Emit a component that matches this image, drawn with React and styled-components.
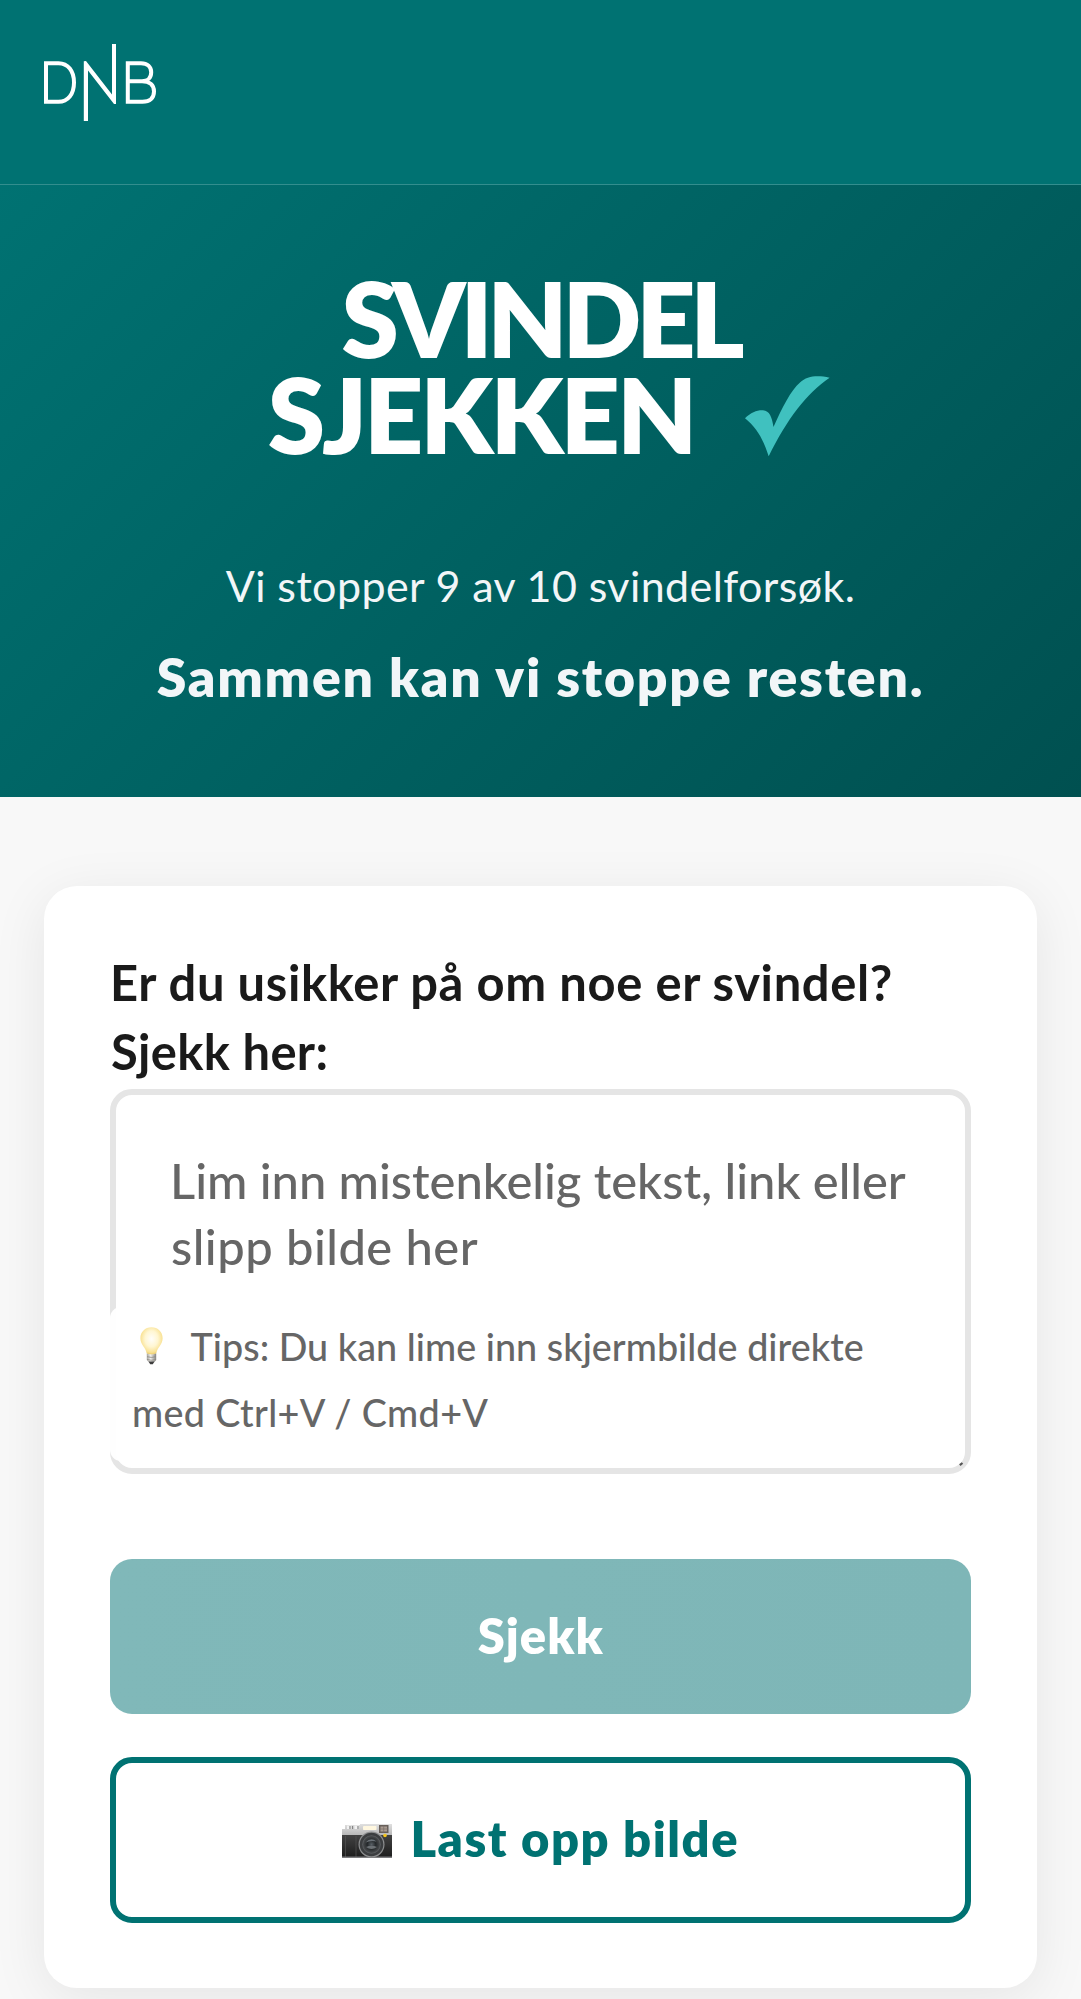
import React from "react";
import styled, { createGlobalStyle, css } from "styled-components";

const GlobalStyle = createGlobalStyle`
  *, *::before, *::after { box-sizing: border-box; }
  body {
    margin: 0;
    background: #f8f8f8;
    font-family: Lato, "Open Sans", sans-serif;
  }
`;

const Page = styled.div`
  height: 1999px;
  overflow: hidden;
  background: #f8f8f8;
`;

const Header = styled.header`
  height: 185px;
  padding: 44px;
  background: #007272;
  border-bottom: 1px solid rgba(255, 255, 255, 0.2);
`;

const Logo = styled.svg`
  display: block;
  width: 112px;
  height: 77px;
`;

const Hero = styled.section`
  height: 612px;
  padding-top: 85px;
  display: flex;
  flex-direction: column;
  align-items: center;
  background: linear-gradient(135deg, #007272 0%, #005050 100%);
  color: #f2f6f8;
`;

const Title = styled.h1`
  margin: 0;
  font-size: 103.5px;
  line-height: 96px;
  font-weight: 800;
  color: #fff;
`;

const TitleLine = styled.span`
  display: flex;
  justify-content: center;
  white-space: nowrap;
  letter-spacing: ${(p) => p.$spacing}px;
`;

const CheckMark = styled.svg`
  flex: none;
  width: 85px;
  height: 81px;
  margin: 9.5px -17px 0 51px;
`;

const Lead = styled.p`
  margin: 89px 0 0;
  font-size: 43px;
  line-height: 69px;
  letter-spacing: 0.4px;
  white-space: nowrap;
`;

const Slogan = styled.p`
  margin: 16px 0 0;
  font-size: 53.5px;
  line-height: 80px;
  font-weight: 800;
  letter-spacing: 1.8px;
  white-space: nowrap;
`;

const Card = styled.main`
  margin: 88.5px 44.5px 0 44px;
  padding: 62.5px 66px 65px;
  background: #fff;
  border-radius: 33px;
  box-shadow: 0 11px 55px rgba(0, 0, 0, 0.08);
`;

const Label = styled.div`
  font-size: 48.9px;
  line-height: 69px;
  font-weight: 700;
  color: #1a1a1a;
`;

const TextLine = styled.div`
  display: flex;
  align-items: center;
  white-space: nowrap;
  letter-spacing: ${(p) => p.$spacing}px;
  padding-left: ${(p) => p.$indent || 0}px;
`;

const InputBox = styled.div`
  position: relative;
  height: 384.5px;
  margin-top: 3px;
  padding: 52px 54px;
  border: 6px solid #e5e5e5;
  border-radius: 22px;
  background: #fff;
  color: #666;
  font-size: 48.9px;
  line-height: 66px;
  font-weight: 500;
`;

const Tip = styled.div`
  position: absolute;
  left: -6px;
  bottom: 7px;
  width: 850px;
  height: 154px;
  padding: 7.5px 22px;
  border-radius: 11px;
  background: rgba(255, 255, 255, 0.95);
  font-size: 37.7px;
  line-height: 66px;
`;

const Bulb = styled.svg`
  flex: none;
  width: 23px;
  height: 38px;
  margin: 0 27.5px 2px 8px;
`;

const ResizeGrip = styled.svg`
  position: absolute;
  right: 1px;
  bottom: 1px;
  width: 5px;
  height: 5px;
`;

const Button = styled.button`
  display: flex;
  align-items: center;
  justify-content: center;
  width: 100%;
  border: 0;
  border-radius: 22px;
  font-family: inherit;
  font-size: 48.9px;
  line-height: 60px;
  font-weight: 800;
  white-space: nowrap;
  ${(p) =>
    p.$outline
      ? css`
          height: 165.5px;
          margin-top: 43.5px;
          padding: 0 0 3px 1px;
          border: 6px solid #007272;
          background: #fff;
          color: #007272;
          letter-spacing: 1.55px;
        `
      : css`
          height: 154.5px;
          margin-top: 85.5px;
          padding: 0 0 2px 1px;
          background: linear-gradient(90deg, #80b8b9, #7eb6b7);
          color: #fff;
          letter-spacing: 1px;
        `}
`;

const Camera = styled.svg`
  flex: none;
  width: 50px;
  height: 34px;
  margin: 6px 18px 0 0;
`;

function DnbLogo() {
  return (
    <Logo viewBox="0 0 112 77" fill="none" stroke="#fff" strokeWidth="4" role="img" aria-label="DNB">
      <path d="M2 19.200H14.500C24 19.200 30 27 30 38.500S24 57.800 14.500 57.800H2Z" />
      <path d="M39.800 17.200L42 17L68 50.500V0H72V60H70L44 26.500V77H39.800Z" fill="#fff" stroke="none" />
      <path d="M83.800 19.200H97C103.500 19.200 107.200 23 107.200 28.200C107.200 33.800 103.500 37.200 98 37.200H83.800M98 37.200C106 37.200 110 41.500 110 47.500C110 53.800 106 57.800 98.500 57.800H83.800V17.200" />
    </Logo>
  );
}

function BulbIcon() {
  return (
    <Bulb viewBox="0 0 23 38" aria-hidden="true">
      <defs>
        <radialGradient id="glass" cx="50%" cy="42%" r="58%">
          <stop offset="0" stopColor="#fffefa" />
          <stop offset="0.5" stopColor="#fff6d2" />
          <stop offset="0.85" stopColor="#f9e294" />
          <stop offset="1" stopColor="#e8c868" />
        </radialGradient>
        <linearGradient id="socket">
          <stop offset="0" stopColor="#a4a29d" />
          <stop offset="0.4" stopColor="#f0efec" />
          <stop offset="1" stopColor="#85837e" />
        </linearGradient>
      </defs>
      <path d="M11.500 0.300C5 0.300 0.400 5 0.400 11.300C0.400 18 5.500 20 6.800 26.500Q11.500 29 16.200 26.500C17.500 20 22.600 18 22.600 11.300C22.600 5 18 0.300 11.500 0.300Z" fill="url(#glass)" />
      <path d="M6.800 26.500Q11.500 28.500 16.200 26.500V33L14 35.500H9L6.800 33Z" fill="url(#socket)" />
      <path d="M7 29.700Q11.500 31.200 16 29.700M7 32.500Q11.500 34 16 32.500" stroke="#8b8983" strokeWidth="0.800" fill="none" />
      <path d="M8.500 34.500H14.500L12.800 37.300H10.200Z" fill="#3d3d3d" />
    </Bulb>
  );
}

function CameraIcon() {
  return (
    <Camera viewBox="0 0 50 34" aria-hidden="true">
      <defs>
        <linearGradient id="silver" x2="0" y2="1">
          <stop offset="0" stopColor="#e0e0e0" />
          <stop offset="1" stopColor="#b4b4b4" />
        </linearGradient>
        <linearGradient id="leather" x2="0" y2="1">
          <stop offset="0" stopColor="#424242" />
          <stop offset="1" stopColor="#1d1d1d" />
        </linearGradient>
        <radialGradient id="lens">
          <stop offset="0" stopColor="#596066" />
          <stop offset="0.5" stopColor="#24282a" />
          <stop offset="1" stopColor="#4a4c4e" />
        </radialGradient>
      </defs>
      <path d="M0 5H3V1H18V0H50V12H0Z" fill="url(#silver)" />
      <path d="M5 1.500H9.500V5H5ZM12.500 1.500H17V5H12.500Z" fill="#f2f2f2" />
      <path d="M8 2V5M10.500 2V5M16 2V5" stroke="#858585" strokeWidth="1.200" />
      <rect x="21" y="2" width="13.500" height="4" rx="0.800" fill="#fff7df" />
      <rect x="37" y="1" width="9.500" height="8" fill="#675f5a" />
      <rect x="38.500" y="2.500" width="6.500" height="5" fill="#a99b91" />
      <path d="M41.700 1.500V8.500M37.500 5H46" stroke="#796e67" strokeWidth="0.700" />
      <rect y="11" width="50" height="22.500" fill="url(#leather)" />
      <path d="M3.500 12V33M14 12V33" stroke="#555" strokeWidth="0.700" />
      <rect y="32.500" width="50" height="1.200" fill="#77777a" />
      <circle cx="29.500" cy="20.500" r="13" fill="#8e8f90" />
      <circle cx="29.500" cy="20.500" r="11.800" fill="#3c3e40" />
      <circle cx="29.500" cy="20.500" r="9.300" fill="#5a5d60" />
      <circle cx="29.500" cy="20.500" r="8.500" fill="url(#lens)" />
      <path d="M23.500 18.500Q29 12.500 34.500 17.500Q29 16 23.500 18.500Z" fill="#6b7278" />
      <path d="M24 23Q29.500 20.500 35 23Q29.500 27 24 23Z" fill="#6c7175" />
      <circle cx="43" cy="11.500" r="1.800" fill="#f4c51d" />
    </Camera>
  );
}

export default function App() {
  return (
    <Page>
      <GlobalStyle />
      <Header>
        <DnbLogo />
      </Header>
      <Hero>
        <Title>
          <TitleLine $spacing={-5.2}>SVINDEL</TitleLine>
          <TitleLine $spacing={-3}>
            SJEKKEN
            <CheckMark viewBox="0 0 85 81" aria-hidden="true">
              <path
                d="M0 42.300C6 36.500 12 34 18 34.300C24.500 34.800 27 41 28.500 51C37 32 46 14 55 6.500C62 0 72 -1 84.600 1.700C62 17 42 43 23.700 80.300C18 63 12 52 0 42.300Z"
                fill="#40c1bf"
              />
            </CheckMark>
          </TitleLine>
        </Title>
        <Lead>Vi stopper 9 av 10 svindelforsøk.</Lead>
        <Slogan>Sammen kan vi stoppe resten.</Slogan>
      </Hero>
      <Card>
        <Label>
          <TextLine $spacing={0.62}>Er du usikker på om noe er svindel?</TextLine>
          <TextLine $spacing={0.35} $indent={1}>Sjekk her:</TextLine>
        </Label>
        <InputBox>
          <TextLine $spacing={-0.03}>Lim inn mistenkelig tekst, link eller</TextLine>
          <TextLine $spacing={0.46} $indent={1}>slipp bilde her</TextLine>
          <Tip>
            <TextLine $spacing={0.04}>
              <BulbIcon />
              Tips: Du kan lime inn skjermbilde direkte
            </TextLine>
            <TextLine $spacing={0.35}>med Ctrl+V / Cmd+V</TextLine>
          </Tip>
          <ResizeGrip viewBox="0 0 5 5" aria-hidden="true">
            <path d="M0.800 3.200L3.500 1" stroke="#555" strokeWidth="2.200" />
          </ResizeGrip>
        </InputBox>
        <Button type="button">Sjekk</Button>
        <Button type="button" $outline>
          <CameraIcon />
          Last opp bilde
        </Button>
      </Card>
    </Page>
  );
}
